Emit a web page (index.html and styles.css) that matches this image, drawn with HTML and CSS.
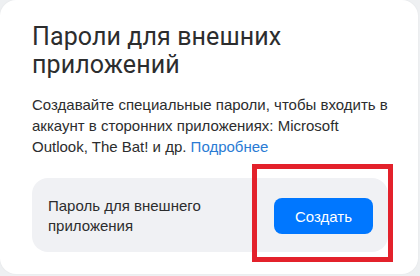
FILE: index.html
```html
<!DOCTYPE html>
<html lang="ru">
<head>
<meta charset="utf-8">
<title>Пароли для внешних приложений</title>
<link rel="stylesheet" href="styles.css">
</head>
<body>
<div class="card">
  <h1 class="title">Пароли для внешних приложений</h1>
  <p class="desc">Создавайте специальные пароли, чтобы входить в аккаунт в сторонних приложениях: Microsoft Outlook, The Bat! и&nbsp;др. <a class="link" href="#">Подробнее</a></p>
  <div class="row">
    <div class="row-text">Пароль для внешнего<br>приложения</div>
    <button class="btn">Создать</button>
  </div>
  <div class="highlight"></div>
</div>
</body>
</html>
```

FILE: styles.css
```css
html, body {
  margin: 0;
  padding: 0;
}
body {
  background: #eef0f2;
  width: 420px;
  height: 276px;
  overflow: hidden;
}
.card {
  position: relative;
  box-sizing: border-box;
  width: 418px;
  height: 274px;
  background: #ffffff;
  border-radius: 16px;
  padding: 23px 30px 0 32px;
  box-shadow: 0 0 2px rgba(0,0,0,0.06);
}
.title {
  margin: 0;
  width: 300px;
  font-family: Roboto, "Noto Sans", sans-serif;
  font-weight: 400;
  font-size: 25px;
  line-height: 28px;
  color: #2c2d2e;
  letter-spacing: 0.1px;
}
.desc {
  margin: 15px 0 0 0;
  width: 358px;
  font-family: "Liberation Sans", Arial, sans-serif;
  font-size: 15px;
  line-height: 21px;
  color: #2c2d2e;
}
.link {
  display: inline-block;
  color: #2a7bd4;
  text-decoration: none;
}
.row {
  margin-top: 21px;
  height: 74px;
  box-sizing: border-box;
  background: #f0f1f4;
  border-radius: 16px;
  padding: 0 15px 0 16px;
  display: flex;
  align-items: center;
  justify-content: space-between;
}
.row-text {
  font-family: "Liberation Sans", Arial, sans-serif;
  font-size: 15px;
  line-height: 20px;
  color: #2c2d2e;
  padding-top: 2px;
}
.btn {
  height: 36px;
  width: 99px;
  margin-top: 2px;
  border: none;
  border-radius: 8px;
  background: #0077ff;
  color: #ffffff;
  font-family: "Liberation Sans", Arial, sans-serif;
  font-size: 15px;
  padding: 0;
}
.highlight {
  position: absolute;
  left: 252px;
  top: 164px;
  width: 141px;
  height: 98px;
  box-sizing: border-box;
  border: 5px solid #e3212b;
}
```
